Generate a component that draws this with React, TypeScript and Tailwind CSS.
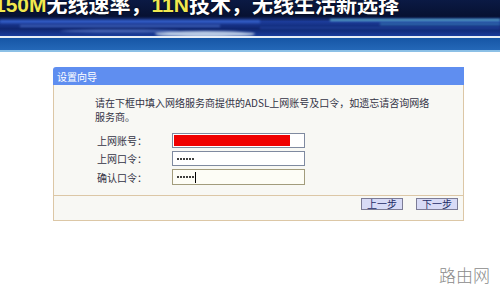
import React from 'react';

const cjk = { fontFamily: '"Noto Sans CJK SC", "Liberation Sans", sans-serif' };

function BannerArt() {
  // the banner picture: dark navy with light streaks
  return (
    <svg className="absolute inset-0" width="500" height="36" viewBox="0 0 500 36">
      <defs>
        <linearGradient id="sky" x1="0" y1="0" x2="0" y2="1">
          <stop offset="0" stopColor="#0b1a44" />
          <stop offset="0.45" stopColor="#071132" />
          <stop offset="0.6" stopColor="#1c3c9a" />
          <stop offset="0.8" stopColor="#0f2670" />
          <stop offset="1" stopColor="#1a3c9c" />
        </linearGradient>
        <filter id="blur" x="-20%" y="-200%" width="140%" height="500%">
          <feGaussianBlur stdDeviation="1.2" />
        </filter>
      </defs>
      <rect width="500" height="36" fill="url(#sky)" />
      <g filter="url(#blur)">
        <rect x="0" y="20" width="260" height="3" fill="#3a64d0" opacity="0.8" />
        <rect x="20" y="25" width="200" height="2" fill="#5c82e0" opacity="0.6" />
        <rect x="330" y="19" width="170" height="2" fill="#5fb4d8" />
        <rect x="380" y="23" width="120" height="2" fill="#3a8cc0" opacity="0.7" />
        <rect x="260" y="27" width="240" height="2" fill="#2a4aa8" opacity="0.7" />
        <ellipse cx="205" cy="34" rx="50" ry="3" fill="#c8d8ec" opacity="0.9" />
        <ellipse cx="120" cy="31" rx="60" ry="1.5" fill="#6080d0" opacity="0.7" />
      </g>
    </svg>
  );
}

function Dots() {
  return (
    <div className="flex items-center gap-[1px]">
      {[0, 1, 2, 3, 4, 5].map(i => (
        <span key={i} className="h-[2px] w-[2px] rounded-full bg-black" />
      ))}
    </div>
  );
}

export default function App() {
  return (
    <div className="relative w-[500px] h-[291px] overflow-hidden bg-white" style={cjk}>
      {/* banner */}
      <div className="relative h-[36px] overflow-hidden">
        <BannerArt />
        <div
          className="relative ml-[-6px] mt-[-9px] whitespace-nowrap text-[21px] font-bold leading-[24px] text-white [text-shadow:0_0_2px_#000]"
        >
          <span className="text-[#f0e850]" style={{ fontFamily: '"Liberation Sans", sans-serif' }}>150M</span>
          无线速率，
          <span className="text-[#f0e850]" style={{ fontFamily: '"Liberation Sans", sans-serif' }}>11N</span>
          技术，无线生活新选择
        </div>
      </div>
      <div className="h-[2px] bg-[#e8eef6]" />
      <div className="h-[12px] bg-gradient-to-b from-[#1656a6] to-[#2468b8]" />
      <div className="h-[2px] bg-[#8cc0e6]" />

      {/* wizard panel */}
      <div className="ml-[53px] mt-[15px] w-[411px]">
        <div className="flex h-[18px] items-center rounded-tl-[3px] bg-[#5f8ef0] pl-[4px] text-[10px] text-white">
          设置向导
        </div>
        <div className="border-x border-b border-[#dcc7a6] bg-[#f8f8f4]">
          <p className="pl-[41px] pt-[11px] text-[10px] leading-[14px] text-[#333344] whitespace-nowrap">
            请在下框中填入网络服务商提供的ADSL上网账号及口令，如遗忘请咨询网络
            <br />
            服务商。
          </p>
          <div className="mt-[9px] flex flex-col gap-[3px] pb-[10px] pl-[43px] text-[10px] text-[#333344]">
            <div className="flex h-[15px] items-center">
              <span className="w-[75px]">上网账号：</span>
              <div className="flex h-[15px] w-[133px] border border-[#7f8aa0] bg-white p-[1px]">
                <div className="h-full w-[116px] bg-[#f00000]" />
              </div>
            </div>
            <div className="flex h-[15px] items-center">
              <span className="w-[75px]">上网口令：</span>
              <div className="flex h-[15px] w-[133px] items-center border border-[#7f8aa0] bg-white pl-[4px]">
                <Dots />
              </div>
            </div>
            <div className="flex h-[16px] items-center">
              <span className="w-[75px]">确认口令：</span>
              <div className="flex h-[16px] w-[133px] items-center border border-[#a29c7c] bg-[#fdfdf6] pl-[4px]">
                <Dots />
                <span className="ml-[1px] h-[11px] w-[1px] bg-black" />
              </div>
            </div>
          </div>
          <div className="flex h-[25px] items-start justify-end gap-[13px] border-t border-[#dcc7a6] pr-[5px] pt-[2px]">
            <button className="flex h-[12px] w-[42px] items-center justify-center border border-[#7c7c96] bg-[#d8dbf6] text-[10px] leading-none text-[#1e2c66]">
              上一步
            </button>
            <button className="flex h-[12px] w-[42px] items-center justify-center border border-[#7c7c96] bg-[#d8dbf6] text-[10px] leading-none text-[#1e2c66]">
              下一步
            </button>
          </div>
        </div>
      </div>

      {/* watermark */}
      <div className="absolute left-[439px] top-[265px] text-[17px] font-light leading-[20px] text-[#8a8a8a]">
        路由网
      </div>
    </div>
  );
}
